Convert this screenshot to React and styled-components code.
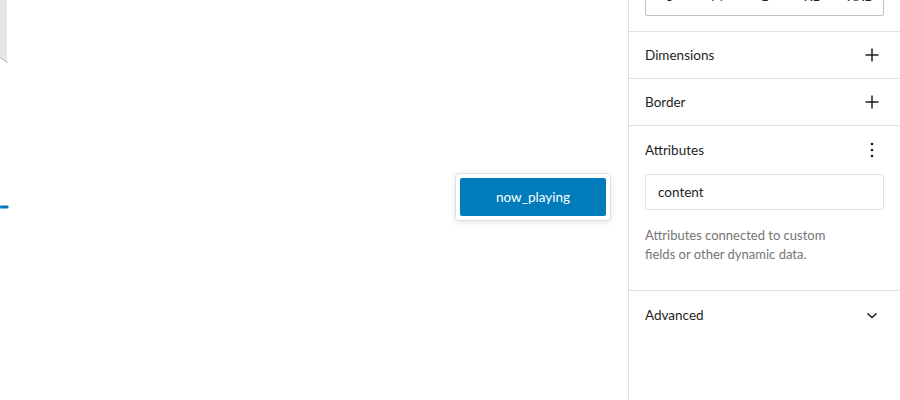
import React from "react";
import styled, { createGlobalStyle } from "styled-components";

const Global = createGlobalStyle`
  html, body { margin: 0; padding: 0; background: #fff; }
  body { font-family: Lato, "Noto Sans", sans-serif; color: #1e1e1e; overflow: hidden; }
  * { box-sizing: border-box; }
`;

const Page = styled.div`
  display: flex;
  width: 900px;
  height: 400px;
  overflow: hidden;
`;

const Canvas = styled.div`
  position: relative;
  flex: 1;
  padding: 173px 0 0 455px;
  background: #fff;
`;

const EdgeShape = styled.svg`
  position: absolute;
  left: 0;
  top: ${(p) => p.$top}px;
`;

const BlockCard = styled.div`
  display: inline-flex;
  padding: 4px;
  background: #fff;
  border: 1px solid #e0e0e0;
  border-radius: 4px;
  box-shadow: 0 2px 6px rgba(0, 0, 0, 0.1);
`;

const BlockButton = styled.div`
  width: 146px;
  height: 38px;
  display: flex;
  align-items: center;
  justify-content: center;
  background: #007cba;
  color: #fff;
  font-size: 13.5px;
  border-radius: 2px;
`;

const Sidebar = styled.aside`
  width: 272px;
  flex: none;
  border-left: 1px solid #e0e0e0;
  background: #fff;
  display: flex;
  flex-direction: column;
`;

const Panel = styled.section`
  border-bottom: ${(p) => (p.$last ? "none" : "1px solid #e0e0e0")};
  padding: ${(p) => p.$pad || "0 16px"};
`;

const Segments = styled.div`
  display: grid;
  grid-template-columns: repeat(5, 1fr);
  height: 40px;
  margin-top: -24px;
  border: 1px solid #c2c2c2;
  border-radius: 2px;
`;

const Segment = styled.span`
  display: flex;
  align-items: center;
  justify-content: center;
  font-size: 13px;
  color: #1e1e1e;
`;

const PanelHeader = styled.div`
  display: flex;
  align-items: center;
  justify-content: space-between;
  height: ${(p) => p.$h || 46}px;
  font-size: 13.5px;
`;

const IconBox = styled.span`
  width: 24px;
  height: 24px;
  display: flex;
  align-items: center;
  justify-content: center;
`;

const Input = styled.div`
  height: 36px;
  border: 1px solid #e0e0e0;
  border-radius: 2px;
  display: flex;
  align-items: center;
  padding: 0 12px;
  font-size: 13.5px;
  color: #1e1e1e;
`;

const Help = styled.p`
  margin: 16px 0 0;
  font-size: 13px;
  line-height: 19px;
  color: #757575;
  max-width: 200px;
`;

const Plus = () => (
  <svg width="24" height="24" viewBox="0 0 24 24">
    <path d="M11.25 5.5h1.5v5.75h5.75v1.5h-5.75v5.75h-1.5v-5.75H5.5v-1.5h5.75z" fill="#1e1e1e" />
  </svg>
);

const Dots = () => (
  <svg width="24" height="24" viewBox="0 0 24 24">
    <circle cx="12" cy="6" r="1.3" fill="#1e1e1e" />
    <circle cx="12" cy="12" r="1.3" fill="#1e1e1e" />
    <circle cx="12" cy="18" r="1.3" fill="#1e1e1e" />
  </svg>
);

const Chevron = () => (
  <svg width="24" height="24" viewBox="0 0 24 24">
    <path d="M7.5 10.5l4.5 4 4.5-4" fill="none" stroke="#1e1e1e" strokeWidth="1.6" />
  </svg>
);

export default function App() {
  return (
    <>
      <Global />
      <Page>
        <Canvas>
          <EdgeShape $top={0} width="10" height="66" viewBox="0 0 10 66">
            <polygon points="0,0 7,0 7,63 0,57" fill="#e6e6e6" />
            <line x1="0" y1="57.5" x2="8" y2="63" stroke="#b8b8b8" strokeWidth="1" />
          </EdgeShape>
          <EdgeShape $top={205} width="10" height="4" viewBox="0 0 10 4">
            <rect x="0" y="0.5" width="8.5" height="3" rx="1" fill="#007cba" />
          </EdgeShape>
          <BlockCard>
            <BlockButton>now_playing</BlockButton>
          </BlockCard>
        </Canvas>
        <Sidebar>
          <Panel $pad="0 16px 15px">
            <Segments>
              {["S", "M", "L", "XL", "XXL"].map((s) => (
                <Segment key={s}>{s}</Segment>
              ))}
            </Segments>
          </Panel>
          <Panel>
            <PanelHeader>
              Dimensions
              <IconBox><Plus /></IconBox>
            </PanelHeader>
          </Panel>
          <Panel>
            <PanelHeader>
              Border
              <IconBox><Plus /></IconBox>
            </PanelHeader>
          </Panel>
          <Panel $pad="0 16px 26px">
            <PanelHeader $h={48}>
              Attributes
              <IconBox><Dots /></IconBox>
            </PanelHeader>
            <Input>content</Input>
            <Help>Attributes connected to custom fields or other dynamic data.</Help>
          </Panel>
          <Panel $last>
            <PanelHeader $h={48}>
              Advanced
              <IconBox><Chevron /></IconBox>
            </PanelHeader>
          </Panel>
        </Sidebar>
      </Page>
    </>
  );
}
